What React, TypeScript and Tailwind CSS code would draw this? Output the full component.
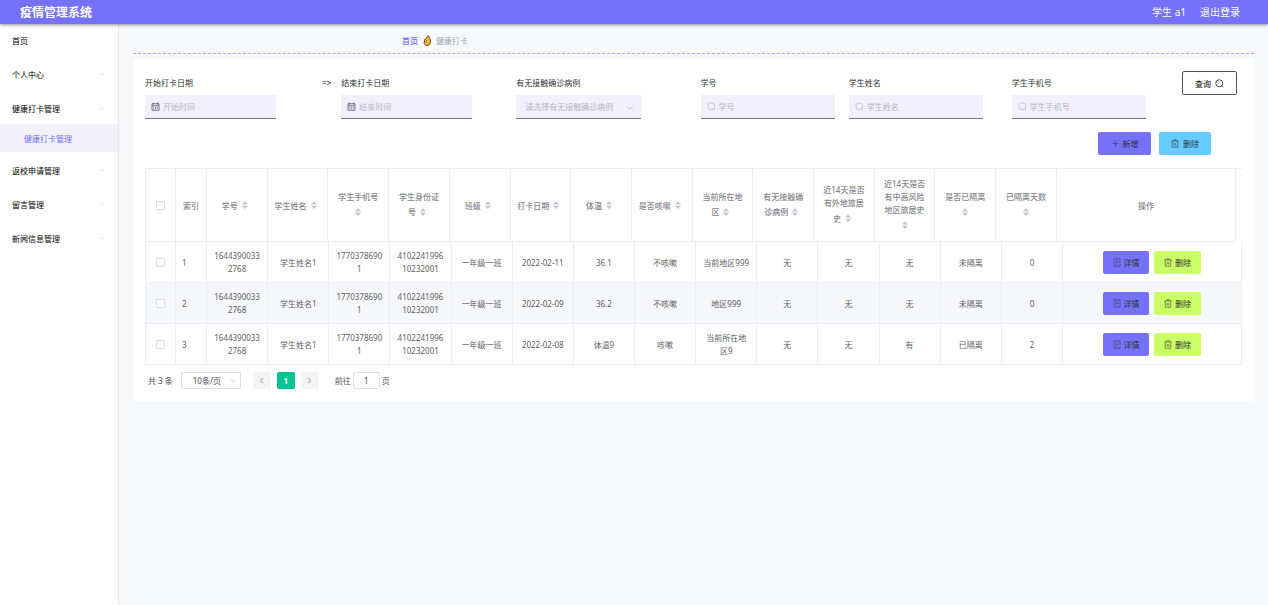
import { useState } from 'react'
import { ChevronDown, ChevronUp, ChevronLeft, ChevronRight, Plus } from 'lucide-react'

const MENU = [
  { label: '首页' },
  { label: '个人中心', children: [] },
  { label: '健康打卡管理', open: true, children: ['健康打卡管理'] },
  { label: '返校申请管理', children: [] },
  { label: '留言管理', children: [] },
  { label: '新闻信息管理', children: [] },
]

const COLUMNS = [
  ['学号'],
  ['学生姓名'],
  ['学生手机号', ''],
  ['学生身份证', '号'],
  ['班级'],
  ['打卡日期'],
  ['体温'],
  ['是否咳嗽'],
  ['当前所在地', '区'],
  ['有无接触确', '诊病例'],
  ['近14天是否', '有外地旅居', '史'],
  ['近14天是否', '有中高风险', '地区旅居史', ''],
  ['是否已隔离', ''],
  ['已隔离天数', ''],
]

const ROWS = [
  ['16443900332768', '学生姓名1', '17703786901', '410224199610232001', '一年级一班', '2022-02-11', '36.1', '不咳嗽', '当前地区999', '无', '无', '无', '未隔离', '0'],
  ['16443900332768', '学生姓名1', '17703786901', '410224199610232001', '一年级一班', '2022-02-09', '36.2', '不咳嗽', '地区999', '无', '无', '无', '未隔离', '0'],
  ['16443900332768', '学生姓名1', '17703786901', '410224199610232001', '一年级一班', '2022-02-08', '体温9', '咳嗽', '当前所在地\n区9', '无', '无', '有', '已隔离', '2'],
]

export default function App() {
  return (
    <div className="flex min-h-screen flex-col bg-[#f6f8fb] font-['Noto_Sans','Noto_Sans_CJK_SC',sans-serif] text-[8px] leading-[13px] text-[#303133]">
      <header className="z-10 flex h-6 items-center justify-between bg-[#7571f9] pr-7 pl-5 text-white shadow-[0_1px_3px_rgba(0,0,0,0.45)]">
        <h1 className="text-[12px] font-bold">疫情管理系统</h1>
        <nav className="flex gap-3.5 text-[10px]">
          <span>学生 a1</span>
          <a href="#">退出登录</a>
        </nav>
      </header>

      <div className="flex flex-1">
        <Sidebar />
        <main className="min-w-0 flex-1 pr-3.5 pl-[15px]">
          <nav className="flex h-[30px] items-center gap-1 border-b border-dashed border-[#a9aae8] pt-1 pl-[24%]">
            <a href="#" className="font-medium text-[#7571f9]">首页</a>
            <HandIcon />
            <span className="text-[#97a8be]">健康打卡</span>
          </nav>
          <section className="mt-1 bg-white p-3 pt-[13px]">
            <Filters />
            <div className="mt-[13px] flex justify-end gap-2 pr-[31px]">
              <button className="flex h-[23px] w-[53px] items-center justify-center gap-[3px] rounded-xs bg-[#7571f9]">
                <Plus size={9} strokeWidth={1.5} />
                新增
              </button>
              <button className="flex h-[23px] w-[52px] items-center justify-center gap-1 rounded-xs bg-[#66ccff]">
                <TrashIcon />
                删除
              </button>
            </div>
            <DataTable />
            <Pagination />
          </section>
        </main>
      </div>
    </div>
  )
}

function Sidebar() {
  return (
    <aside className="w-[118px] shrink-0 bg-white text-black shadow-[0_0_2px_rgba(0,0,0,0.2)]">
      <ul className="flex flex-col gap-0.5">
        {MENU.map((item) => (
          <li key={item.label}>
            <a href="#" className="flex h-8 items-center justify-between px-3">
              {item.label}
              {item.children &&
                (item.open ? (
                  <ChevronUp size={9} strokeWidth={2} className="text-gray-300" />
                ) : (
                  <ChevronDown size={9} strokeWidth={2} className="text-gray-300" />
                ))}
            </a>
            {item.children?.map((child) => (
              <a key={child} href="#" className="flex h-7 items-center bg-[#f2f0fb] pl-6 text-[#7571f9]">
                {child}
              </a>
            ))}
          </li>
        ))}
      </ul>
    </aside>
  )
}

function Filters() {
  return (
    <form className="grid grid-cols-[196fr_175fr_184fr_148fr_163fr_170fr_60fr]">
      <div className="flex justify-between pr-2.5">
        <Field id="start" label="开始打卡日期" placeholder="开始时间" date />
        <span className="mt-[5px] text-black">=&gt;</span>
      </div>
      <Field id="end" label="结束打卡日期" placeholder="结束时间" date />
      <div>
        <label htmlFor="contact" className="block py-[5px] pb-1.5">有无接触确诊病例</label>
        <div className="relative w-[125px]">
          <select
            id="contact"
            defaultValue=""
            className="h-6 w-full appearance-none border-b border-[#707278] bg-[#f2f0fe] pl-[9px] text-[#b4b7c0] outline-none"
          >
            <option value="">请选择有无接触确诊病例</option>
            <option>有</option>
            <option>无</option>
          </select>
          <ChevronDown size={10} strokeWidth={2} className="pointer-events-none absolute top-2 right-1.5 text-[#b4b7c0]" />
        </div>
      </div>
      <Field id="number" label="学号" placeholder="学号" />
      <Field id="name" label="学生姓名" placeholder="学生姓名" />
      <Field id="phone" label="学生手机号" placeholder="学生手机号" />
      <button
        type="button"
        className="flex h-6 w-[55px] items-center justify-center gap-1 rounded-xs border border-[#505256] bg-white text-black"
      >
        查询
        <SearchIcon />
      </button>
    </form>
  )
}

function Field({ id, label, placeholder, date }: { id: string; label: string; placeholder: string; date?: boolean }) {
  return (
    <div>
      <label htmlFor={id} className="block pt-[5px] pb-1.5">{label}</label>
      <div
        className={`flex h-6 items-center gap-[3px] border-b border-[#707278] bg-[#f2f0fe] pl-1.5 ${date ? 'w-[131px]' : 'w-[134px] text-[#b4b7c0]'}`}
      >
        {date ? <CalendarIcon /> : <SearchIcon />}
        <input id={id} placeholder={placeholder} className="w-full min-w-0 bg-transparent outline-none placeholder:text-[#b4b7c0]" />
      </div>
    </div>
  )
}

function Cols() {
  return (
    <colgroup>
      <col className="w-[30px]" />
      <col className="w-[31px]" />
      {COLUMNS.map((_, i) => (
        <col key={i} />
      ))}
      <col className="w-[179px]" />
    </colgroup>
  )
}

function DataTable() {
  return (
    <div className="mt-[13px] border-t border-l border-[#ebeef5] text-center">
      <div className="pr-1.5">
        <table className="w-full table-fixed border-separate border-spacing-0 text-[#85888e]">
          <Cols />
          <thead>
            <tr className="h-[73px] *:border-r *:border-b *:border-[#ebeef5] *:p-0 *:font-medium">
              <th>
                <Checkbox label="全选" />
              </th>
              <th>索引</th>
              {COLUMNS.map((lines, i) => (
                <th key={i}>
                  {lines.map((line, j) => (
                    <div key={j} className="flex items-center justify-center whitespace-nowrap">
                      {line}
                      {j === lines.length - 1 && <SortIcon />}
                    </div>
                  ))}
                </th>
              ))}
              <th>操作</th>
            </tr>
          </thead>
        </table>
      </div>
      <table className="w-full table-fixed border-separate border-spacing-0 text-[#606266]">
        <Cols />
        <tbody>
          {ROWS.map((row, i) => (
            <tr key={i} className="h-[41px] *:border-r *:border-b *:border-[#ebeef5] even:bg-[#f5f7fb]">
              <td className="p-0">
                <Checkbox label={`选择第${i + 1}行`} />
              </td>
              <td className="p-0 pl-1.5 text-left">{i + 1}</td>
              {row.map((cell, j) => (
                <td key={j} className="px-1.5 py-0 break-all whitespace-pre-line">{cell}</td>
              ))}
              <td className="p-0">
                <div className="flex justify-center gap-[5px]">
                  <button className="flex h-[23px] w-[46px] items-center justify-center gap-[3px] rounded-xs bg-[#7571f9] text-[#303133]">
                    <DocumentIcon />
                    详情
                  </button>
                  <button className="flex h-[23px] w-[47px] items-center justify-center gap-[3px] rounded-xs bg-[#ccff66] text-[#303133]">
                    <TrashIcon />
                    删除
                  </button>
                </div>
              </td>
            </tr>
          ))}
        </tbody>
      </table>
    </div>
  )
}

function Pagination() {
  const [page, setPage] = useState('1')
  return (
    <div className="mt-[7px] flex items-center pl-[3px] text-[#505256]">
      <span>共 3 条</span>
      <div className="relative ml-2 w-[60px]">
        <select aria-label="每页条数" className="h-[17px] w-full appearance-none rounded-xs border border-[#dcdfe6] bg-white pl-[11px] outline-none">
          <option>10条/页</option>
          <option>20条/页</option>
        </select>
        <ChevronDown size={8} strokeWidth={2} className="pointer-events-none absolute top-[5px] right-1 text-[#c0c4cc]" />
      </div>
      <div className="ml-3 flex gap-1.5">
        <button aria-label="上一页" disabled className="flex h-[17px] w-[18px] items-center justify-center rounded-xs bg-[#f4f4f5] text-[#b4b7c0]">
          <ChevronLeft size={9} strokeWidth={3} />
        </button>
        <button className="h-[17px] w-[18px] rounded-xs bg-[#00c292] font-bold text-white">1</button>
        <button aria-label="下一页" disabled className="flex h-[17px] w-[18px] items-center justify-center rounded-xs bg-[#f4f4f5] text-[#b4b7c0]">
          <ChevronRight size={9} strokeWidth={3} />
        </button>
      </div>
      <label htmlFor="page" className="ml-4">前往</label>
      <input
        id="page"
        value={page}
        onChange={(e) => setPage(e.target.value)}
        className="mx-0.5 h-[17px] w-[27px] rounded-xs border border-[#dcdfe6] text-center outline-none"
      />
      <span>页</span>
    </div>
  )
}

function Checkbox({ label }: { label: string }) {
  return (
    <input
      type="checkbox"
      aria-label={label}
      className="mx-auto block size-[9px] appearance-none rounded-[1px] border border-[#dcdfe6] bg-white checked:bg-[#7571f9]"
    />
  )
}

function SortIcon() {
  return (
    <span className="flex h-[18px] w-3.5 items-center justify-center">
      <svg width="6" height="8" viewBox="0 0 6 8" fill="#c0c4cc">
        <path d="M0 3.4 3 0.2 6 3.4ZM0 4.8H6L3 8Z" />
      </svg>
    </span>
  )
}

function SearchIcon() {
  return (
    <svg width="9" height="9" viewBox="0 0 18 18" fill="none" stroke="currentColor" strokeWidth="1.4" className="shrink-0">
      <circle cx="8.5" cy="8.5" r="7" />
      <path d="m13.5 13.5 3 3" />
    </svg>
  )
}

function CalendarIcon() {
  return (
    <svg width="9" height="9" viewBox="0 0 18 18" fill="none" stroke="#686b82" strokeWidth="1.8" className="shrink-0">
      <path d="M2 3.5h14v13H2ZM2 7.5h14M5 1v4M13 1v4M4.5 10.5h2M8 10.5h2M11.5 10.5h2M4.5 13.5h2M8 13.5h2M11.5 13.5h2" />
    </svg>
  )
}

function TrashIcon() {
  return (
    <svg width="8" height="9" viewBox="0 0 16 18" fill="none" stroke="currentColor" strokeWidth="1.1" className="shrink-0">
      <path d="M0.5 4h15M2.500 4v12.500h11V4M5.500 4V1.500h5V4M6.500 7.500v6M9.500 7.500v6" />
    </svg>
  )
}

function DocumentIcon() {
  return (
    <svg width="8" height="9" viewBox="0 0 16 18" fill="none" stroke="currentColor" strokeWidth="0.9" className="shrink-0">
      <path d="M2 1.500h12v15H2ZM5 6h6M5 9h6M5 12.500h4" />
    </svg>
  )
}

function HandIcon() {
  return (
    <svg width="10" height="11" viewBox="0 0 20 22">
      <path
        d="M5 9 8.500 7.500 10.500 3 13 1.500 14.500 3 14.500 6 16.500 8 17 14 15 19 12 21 7 20.500 4.500 17Z"
        fill="#f0b92e"
        stroke="#4a3510"
        strokeWidth="1.600"
      />
      <path d="M8.500 11v4" stroke="#4a3510" strokeWidth="1.200" />
    </svg>
  )
}
